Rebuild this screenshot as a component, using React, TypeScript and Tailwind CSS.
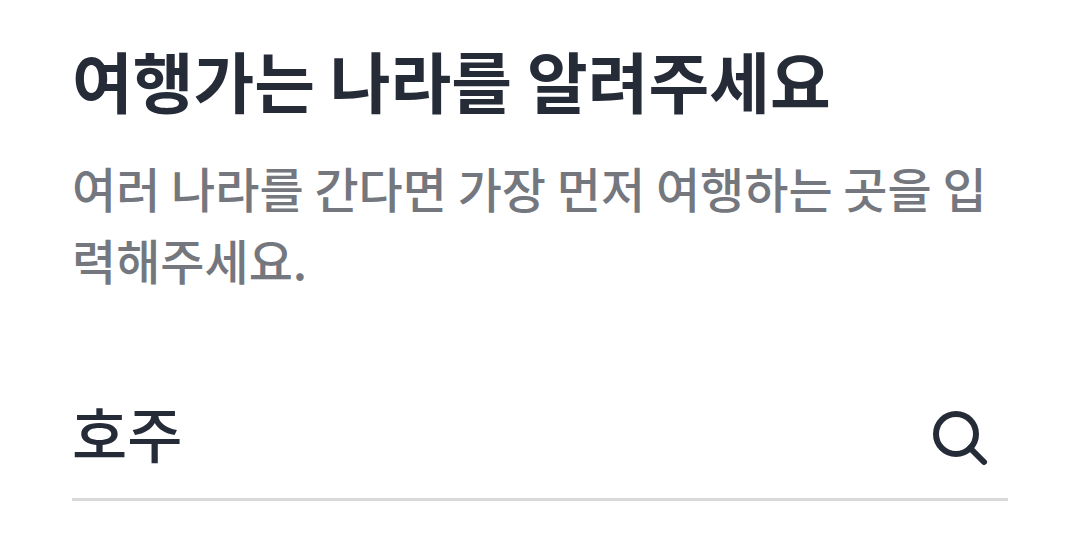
import React from 'react';

const SearchIcon: React.FC = () => (
  <svg width="60" height="60" viewBox="0 0 60 60" fill="none" stroke="currentColor" strokeWidth="6" strokeLinecap="round" aria-hidden="true">
    <circle cx="27" cy="26" r="20" />
    <path d="M41 40 L55 54" />
  </svg>
);

const App: React.FC = () => {
  return (
    <main className="bg-white pt-[34px] pr-[68px] pb-14 pl-[72px] font-['Noto_Sans_CJK_KR',sans-serif] text-[#252b37]">
      <h1 className="text-[66px] leading-[90px] font-bold">여행가는 나라를 알려주세요</h1>
      <p className="mt-[27px] text-[48px] leading-[72px] font-medium break-all text-[#74777d]">
        여러 나라를 간다면 가장 먼저 여행하는 곳을 입력해주세요.
      </p>
      <form className="mt-20 flex items-center border-b-3 border-[#d9d9db] pr-[19px] pb-[11px]">
        <input
          type="text"
          aria-label="여행가는 나라"
          defaultValue="호주"
          className="h-28 min-w-0 flex-1 text-[60px] font-medium outline-none"
        />
        <button type="button" aria-label="검색" className="pt-3.5">
          <SearchIcon />
        </button>
      </form>
    </main>
  );
};

export default App;
